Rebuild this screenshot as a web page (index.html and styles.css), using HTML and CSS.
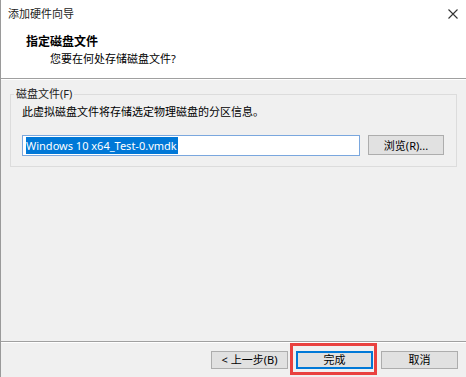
FILE: index.html
```html
<!DOCTYPE html>
<html lang="zh-CN">
<head>
  <meta charset="UTF-8" />
  <title>添加硬件向导</title>
  <link rel="stylesheet" href="styles.css">
</head>
<body>

  <div class="window">

    <!-- TITLE BAR -->
    <div class="titlebar">
      <span class="titleText">添加硬件向导</span>
      <svg class="closeIcon" width="10" height="10" viewBox="0 0 10 10">
        <path d="M0.5 0.5 L9.5 9.5 M9.5 0.5 L0.5 9.5" stroke="#333" stroke-width="1.1" fill="none" />
      </svg>
    </div>

    <!-- WIZARD HEADER -->
    <div class="wizardHeader">
      <div class="stepTitle">指定磁盘文件</div>
      <div class="stepSubtitle">您要在何处存储磁盘文件?</div>
    </div>

    <!-- CONTENT -->
    <div class="content">
      <fieldset class="groupBox">
        <legend>磁盘文件(F)</legend>
        <p class="description">此虚拟磁盘文件将存储选定物理磁盘的分区信息。</p>
        <div class="fileRow">
          <div class="textInput"><span class="selected">Windows 10 x64_Test-0.vmdk</span></div>
          <button class="btn">浏览(R)...</button>
        </div>
      </fieldset>
    </div>

    <!-- FOOTER BUTTONS -->
    <div class="footer">
      <button class="btn btnWide">&lt; 上一步(B)</button>
      <div class="highlightWrap">
        <button class="btn btnWide btnDefault">完成</button>
        <div class="highlight"></div>
      </div>
      <button class="btn btnWide">取消</button>
    </div>

  </div>

</body>
</html>
```

FILE: styles.css
```css
/* RESET */
* {
  margin: 0;
  padding: 0;
  box-sizing: border-box;
}

body {
  width: 466px;
  height: 377px;
  overflow: hidden;
  background-color: #f0f0f0;
  font-family: "Noto Sans", "Noto Sans CJK SC", sans-serif;
  font-size: 11px;
  line-height: 16px;
  color: #000;
}

/* Whole dialog */
.window {
  display: flex;
  flex-direction: column;
  height: 377px;
  border-left: 1px solid #9a9a9a;
}

/* Title bar */
.titlebar {
  height: 27px;
  background-color: #fff;
  display: flex;
  align-items: center;
  justify-content: space-between;
  padding: 0 8px 0 7px;
}
.titleText {
  color: #222;
}
.closeIcon {
  margin-top: 1px;
}

/* White wizard header */
.wizardHeader {
  height: 52px;
  background-color: #fff;
  padding: 7px 0 0 25px;
  border-bottom: 1px solid #a0a0a0;
  box-shadow: 0 1px 0 #fff;
}
.stepTitle {
  font-weight: bold;
  font-size: 12px;
}
.stepSubtitle {
  margin-left: 24px;
  margin-top: 1px;
}

/* Main content area */
.content {
  flex: 1;
  padding: 7px 9px 0 9px;
}

.groupBox {
  border: 1px solid #dcdcdc;
  padding: 2px 12px 10px 11px;
}
.groupBox legend {
  margin-left: -8px;
  padding: 0 2px;
  color: #222;
}

.description {
  margin-bottom: 15px;
}

.fileRow {
  display: flex;
  align-items: flex-start;
  gap: 8px;
}
.textInput {
  flex: 1;
  height: 21px;
  border: 1px solid #7aa7de;
  background-color: #fff;
  padding: 1px 0 0 3px;
  line-height: 17px;
  font-size: 11px;
}
.selected {
  background-color: #0078d7;
  color: #fff;
  display: inline-block;
  padding-right: 1px;
}

/* Buttons */
.btn {
  width: 76px;
  height: 20px;
  background-color: #e1e1e1;
  border: 1px solid #adadad;
  font-family: inherit;
  font-size: 11px;
  color: #000;
}
.btnWide {
  width: 77px;
  height: 18px;
  line-height: 14px;
}
.btnDefault {
  border-color: #0078d7;
  box-shadow: inset 0 0 0 1px #0078d7;
}

/* Footer with wizard navigation */
.footer {
  display: flex;
  justify-content: flex-end;
  gap: 8px;
  padding: 9px 8px 8px 0;
  border-top: 1px solid #a0a0a0;
  box-shadow: inset 0 1px 0 #fff;
}

/* Red annotation box around the finish button */
.highlightWrap {
  position: relative;
  display: flex;
}
.highlight {
  position: absolute;
  left: -6px;
  top: -8px;
  right: -4px;
  bottom: -6px;
  border: 3px solid #e9413f;
}
```
